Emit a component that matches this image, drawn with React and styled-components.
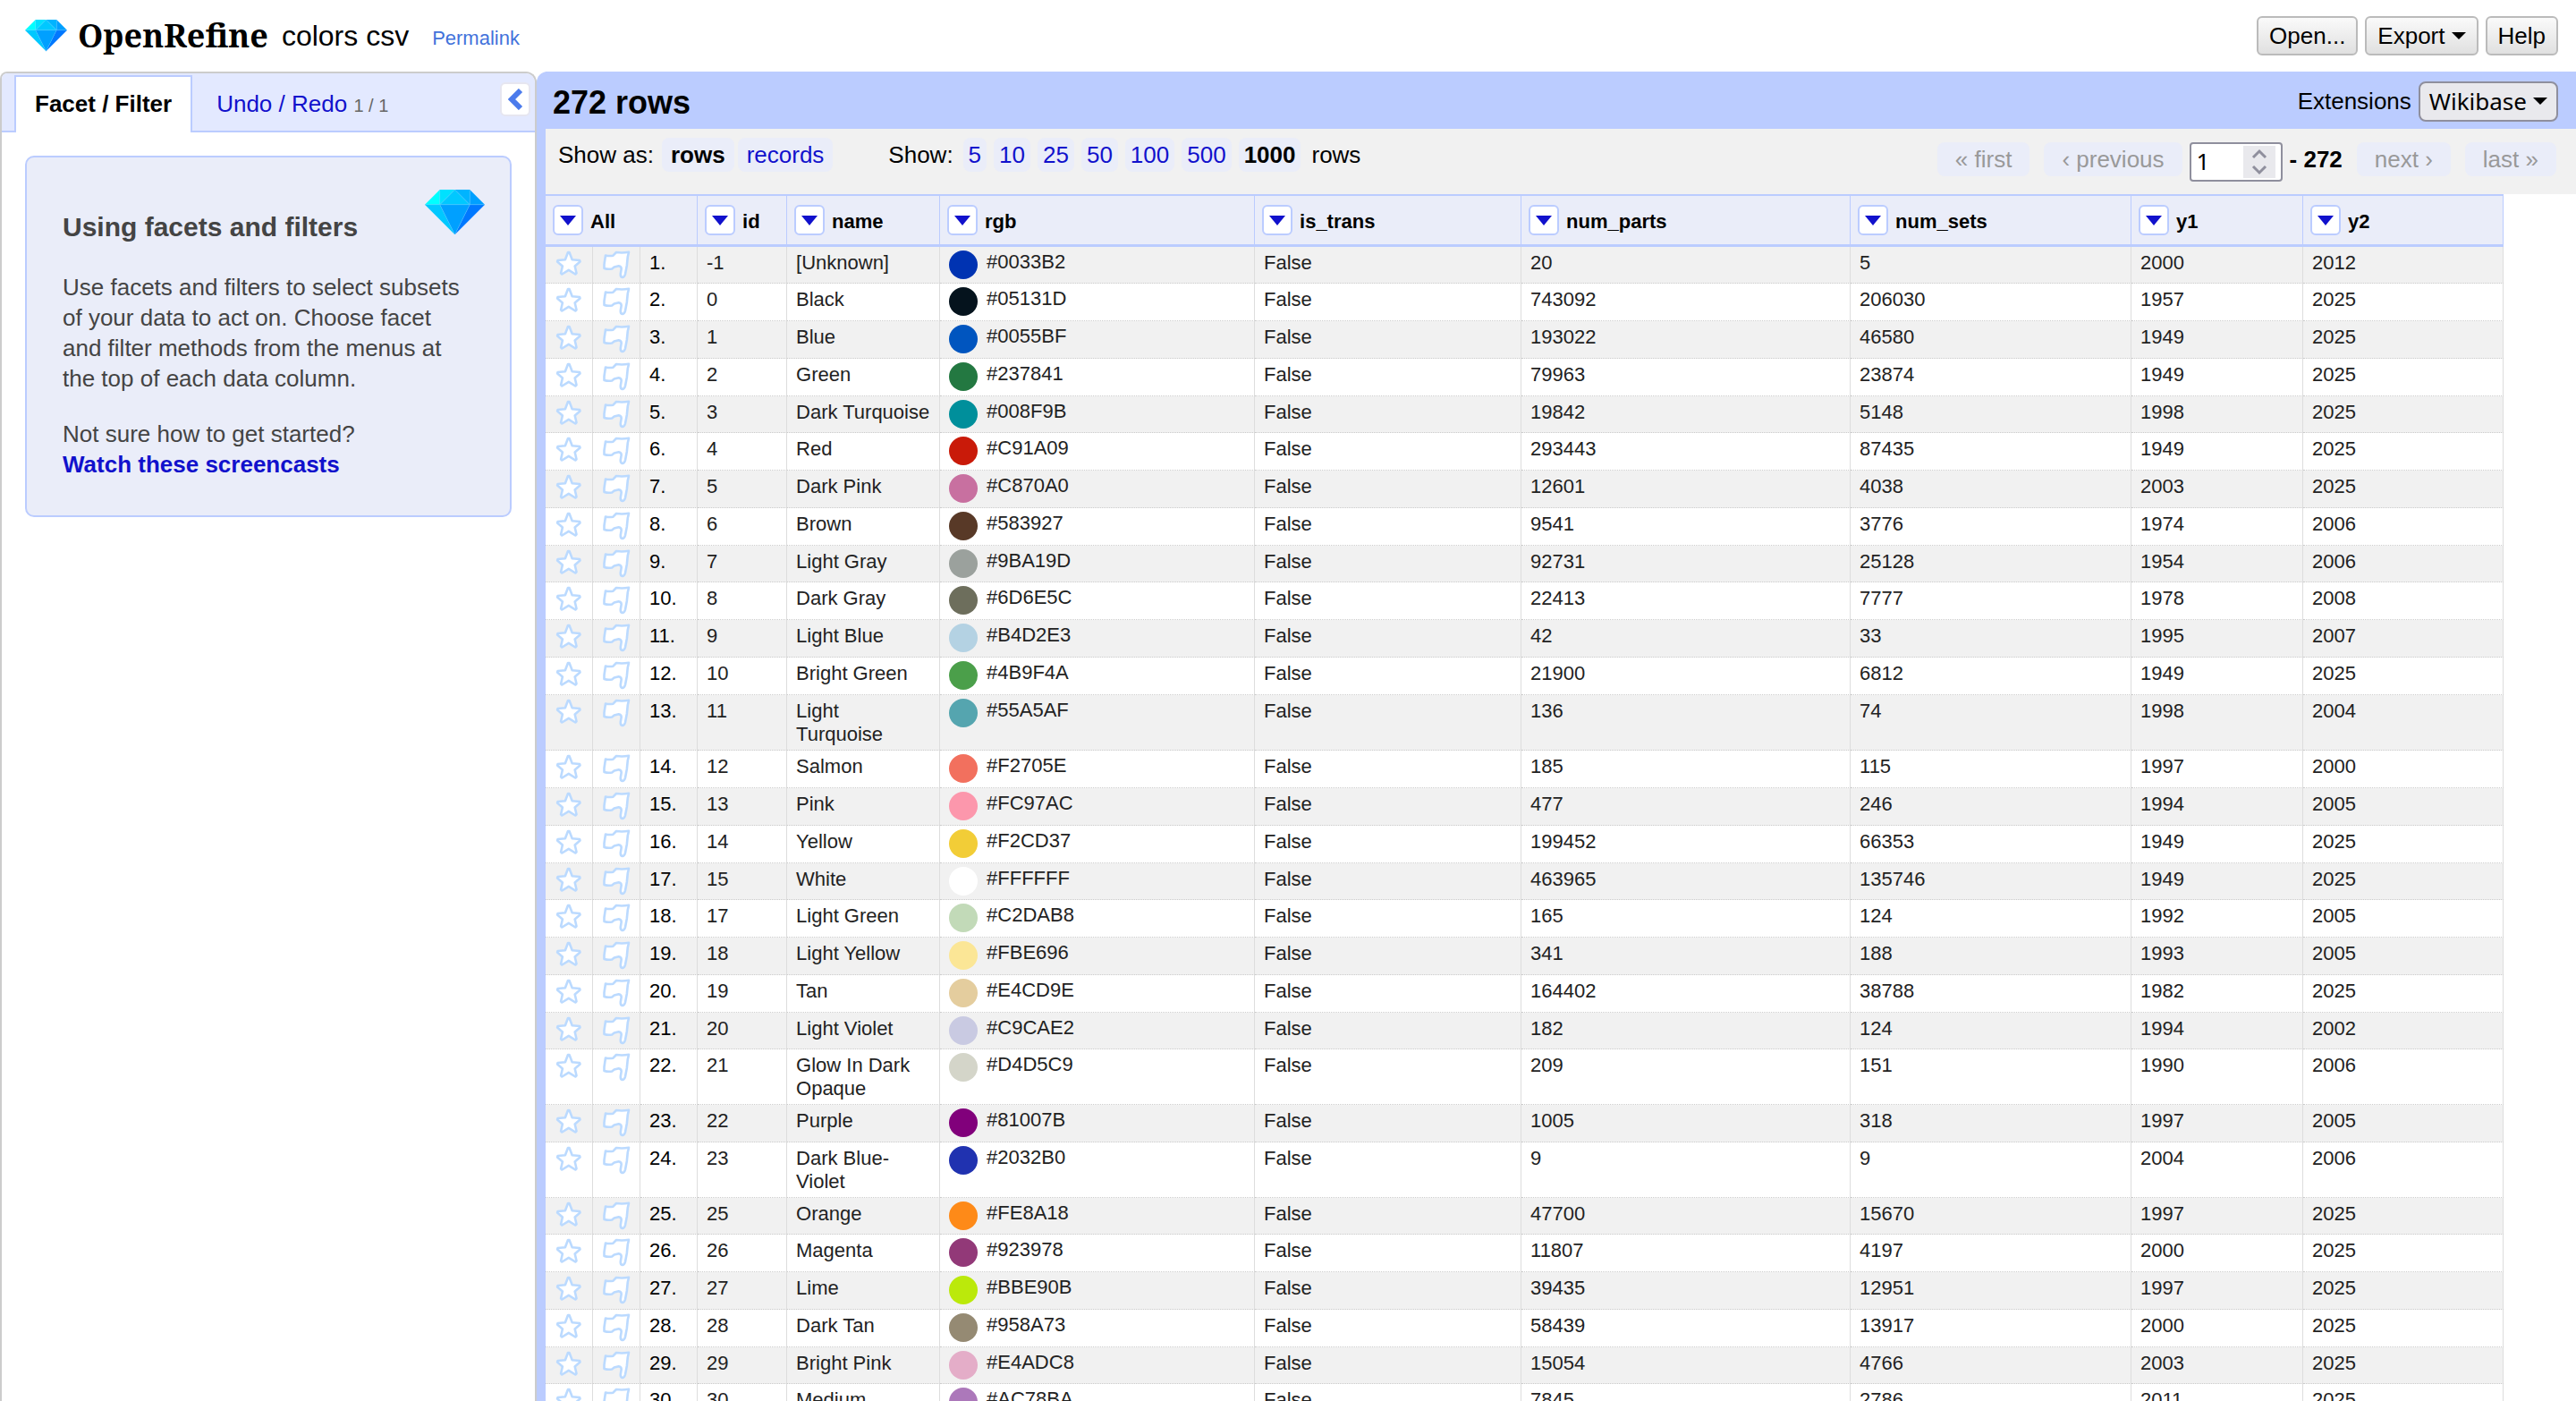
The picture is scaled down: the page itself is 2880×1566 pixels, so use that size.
import { createGlobalStyle } from 'styled-components'
import styled from 'styled-components'

const columns = ['id', 'name', 'rgb', 'is_trans', 'num_parts', 'num_sets', 'y1', 'y2']
const widths = [53, 53, 64, 100, 171, 352, 298, 368, 314, 192, 224]

const data = [
    ['-1', '[Unknown]', '0033B2', '20', '5', '2000', '2012'],
    ['0', 'Black', '05131D', '743092', '206030', '1957', '2025'],
    ['1', 'Blue', '0055BF', '193022', '46580', '1949', '2025'],
    ['2', 'Green', '237841', '79963', '23874', '1949', '2025'],
    ['3', 'Dark Turquoise', '008F9B', '19842', '5148', '1998', '2025'],
    ['4', 'Red', 'C91A09', '293443', '87435', '1949', '2025'],
    ['5', 'Dark Pink', 'C870A0', '12601', '4038', '2003', '2025'],
    ['6', 'Brown', '583927', '9541', '3776', '1974', '2006'],
    ['7', 'Light Gray', '9BA19D', '92731', '25128', '1954', '2006'],
    ['8', 'Dark Gray', '6D6E5C', '22413', '7777', '1978', '2008'],
    ['9', 'Light Blue', 'B4D2E3', '42', '33', '1995', '2007'],
    ['10', 'Bright Green', '4B9F4A', '21900', '6812', '1949', '2025'],
    ['11', 'Light Turquoise', '55A5AF', '136', '74', '1998', '2004'],
    ['12', 'Salmon', 'F2705E', '185', '115', '1997', '2000'],
    ['13', 'Pink', 'FC97AC', '477', '246', '1994', '2005'],
    ['14', 'Yellow', 'F2CD37', '199452', '66353', '1949', '2025'],
    ['15', 'White', 'FFFFFF', '463965', '135746', '1949', '2025'],
    ['17', 'Light Green', 'C2DAB8', '165', '124', '1992', '2005'],
    ['18', 'Light Yellow', 'FBE696', '341', '188', '1993', '2005'],
    ['19', 'Tan', 'E4CD9E', '164402', '38788', '1982', '2025'],
    ['20', 'Light Violet', 'C9CAE2', '182', '124', '1994', '2002'],
    ['21', 'Glow In Dark Opaque', 'D4D5C9', '209', '151', '1990', '2006'],
    ['22', 'Purple', '81007B', '1005', '318', '1997', '2005'],
    ['23', 'Dark Blue-Violet', '2032B0', '9', '9', '2004', '2006'],
    ['25', 'Orange', 'FE8A18', '47700', '15670', '1997', '2025'],
    ['26', 'Magenta', '923978', '11807', '4197', '2000', '2025'],
    ['27', 'Lime', 'BBE90B', '39435', '12951', '1997', '2025'],
    ['28', 'Dark Tan', '958A73', '58439', '13917', '2000', '2025'],
    ['29', 'Bright Pink', 'E4ADC8', '15054', '4766', '2003', '2025'],
    ['30', 'Medium Lavender', 'AC78BA', '7845', '2786', '2011', '2025'],
]

const Diamond = ({ width }) => (
    <svg width={width} viewBox="0 0 48 36" aria-hidden="true">
        <path fill="#00ffff" d="M12 0L0 12h12z" />
        <path fill="#00e1ff" d="M12 0h12L12 12z" />
        <path fill="#00c8ff" d="M24 0l12 12H12z" />
        <path fill="#00b4ff" d="M24 0h12v12z" />
        <path fill="#00a0ff" d="M36 0l12 12H36z" />
        <path fill="#00c8ff" d="M0 12h12l12 24z" />
        <path fill="#00a0ff" d="M12 12h24L24 36z" />
        <path fill="#0078ff" d="M36 12h12L24 36z" />
        <path fill="none" stroke="#5cf" strokeOpacity=".6" strokeWidth=".5" d="M0 12h48M12 0v12L24 0l12 12V0M12 12l12 24 12-24" />
    </svg>
)

const Star = () => (
    <svg width="30" height="30" viewBox="0 0 30 30" aria-hidden="true">
        <path
            fill="#fff"
            stroke="#bbdaff"
            strokeWidth="2.6"
            strokeLinejoin="round"
            d="M14 2h1.500l3.200 8.200 8.300.8.500 1.500-5.800 5 1.800 7.800-1.200 1.200-7.500-4.700-7.500 4.700-1.200-1.200 1.800-7.800-5.800-5 .500-1.500 8.300-.8z"
        />
    </svg>
)

const Flag = () => (
    <svg width="32" height="32" viewBox="0 0 32 32" aria-hidden="true">
        <path
            fill="#fff"
            stroke="#bbdaff"
            strokeWidth="2.6"
            strokeLinejoin="round"
            d="M4 5.500q4 1 8.500.2L16 2q7 1 14-.3-.6 3-1.200 5.300l-1 10-1.800 9.500q-1 3.500-3.200 3.500-2.300-.5-2-4l.9-5.500q0-2.700-3-3.200l-5 1.200-2.500 2q-4.500.8-8.700-.5v-4.500z"
        />
    </svg>
)

const App = () => {
    return (
        <>
            <GlobalStyle />
            <Page>
                <Header>
                    <Brand href="#"><Diamond width={47} />OpenRefine</Brand>
                    <ProjectName>colors csv</ProjectName>
                    <Permalink href="#">Permalink</Permalink>
                    <Actions>
                        <Button>Open...</Button>
                        <Button>Export<Caret /></Button>
                        <Button>Help</Button>
                    </Actions>
                </Header>
                <Main>
                    <Sidebar>
                        <Tabs>
                            <ActiveTab href="#">Facet / Filter</ActiveTab>
                            <Tab href="#">Undo / Redo <small>1 / 1</small></Tab>
                            <Collapse aria-label="Hide panel">
                                <svg width="18" height="24" viewBox="0 0 18 24">
                                    <path fill="none" stroke="#4b7bec" strokeWidth="6" d="M15 2L5 12l10 10" />
                                </svg>
                            </Collapse>
                        </Tabs>
                        <Help>
                            <HelpTop>
                                <H1>Using facets and filters</H1>
                                <Diamond width={67} />
                            </HelpTop>
                            <p>Use facets and filters to select subsets of your data to act on. Choose facet and filter methods from the menus at the top of each data column.</p>
                            <p>Not sure how to get started?<br /><a href="#">Watch these screencasts</a></p>
                        </Help>
                    </Sidebar>
                    <Content>
                        <Summary>
                            <H2>272 rows</H2>
                            <Extensions>Extensions <WikiButton>Wikibase<Caret /></WikiButton></Extensions>
                        </Summary>
                        <Controls>
                            <Modes>
                                <span>Show as:</span>
                                <Current>rows</Current>
                                <Option href="#">records</Option>
                            </Modes>
                            <Sizes>
                                <span>Show:</span>
                                {
                                    [5, 10, 25, 50, 100, 500].map((size) => <Option href="#" key={size}>{size}</Option>)
                                }
                                <Current>1000</Current>
                                <span>rows</span>
                            </Sizes>
                            <Pager>
                                <PageButton disabled>« first</PageButton>
                                <PageButton disabled>‹ previous</PageButton>
                                <Position>
                                    <PageField>
                                        <input type="text" aria-label="First row" defaultValue="1" />
                                        <Spinner>
                                            <svg width="18" height="30" viewBox="0 0 18 30">
                                                <path fill="none" stroke="#8f8f9d" strokeWidth="3" d="M2 10l7-7 7 7M2 20l7 7 7-7" />
                                            </svg>
                                        </Spinner>
                                    </PageField>
                                    <b>- 272</b>
                                </Position>
                                <PageButton disabled>next ›</PageButton>
                                <PageButton disabled>last »</PageButton>
                            </Pager>
                        </Controls>
                        <Table>
                            <colgroup>
                                {widths.map((width, index) => <Col key={index} $width={width} />)}
                            </colgroup>
                            <thead>
                                <tr>
                                    <Th colSpan={3}><Heading><Menu aria-label="All" />All</Heading></Th>
                                    {
                                        columns.map((name) => (
                                            <Th key={name}><Heading><Menu aria-label={name} />{name}</Heading></Th>
                                        ))
                                    }
                                </tr>
                            </thead>
                            <tbody>
                                {
                                    data.map(([id, name, rgb, parts, sets, y1, y2], index) => (
                                        <Row key={id}>
                                            <IconCell><IconButton aria-label="Star"><Star /></IconButton></IconCell>
                                            <IconCell><IconButton aria-label="Flag"><Flag /></IconButton></IconCell>
                                            <NumberCell>{index + 1}.</NumberCell>
                                            <Td>{id}</Td>
                                            <Td>{name}</Td>
                                            <ColorCell><Color><Swatch $color={`#${rgb}`} />#{rgb}</Color></ColorCell>
                                            <Td>False</Td>
                                            <Td>{parts}</Td>
                                            <Td>{sets}</Td>
                                            <Td>{y1}</Td>
                                            <Td>{y2}</Td>
                                        </Row>
                                    ))
                                }
                            </tbody>
                        </Table>
                    </Content>
                </Main>
            </Page>
        </>
    )
}

const GlobalStyle = createGlobalStyle`
    * {
        box-sizing: border-box;
    }
    body {
        margin: 0;
        color: #000;
        background-color: #fff;
        font: 26px/34px "Liberation Sans", Arial, sans-serif;
    }
    a {
        color: #11c;
        text-decoration: none;
    }
    button, input {
        font: inherit;
    }
    svg {
        display: block;
    }
`

const Page = styled.div`
    display: flex;
    flex-direction: column;
    height: 100vh;
    overflow: hidden;
`
const Header = styled.header`
    display: flex;
    align-items: center;
    height: 80px;
    padding: 0 20px 0 28px;
`
const Brand = styled.a`
    display: flex;
    align-items: center;
    gap: 12px;
    color: #000;
    font: bold 36px/48px "Noto Serif", "DejaVu Serif Condensed", serif;
`
const ProjectName = styled.h1`
    margin: 0 26px 0 15px;
    font-size: 32px;
    font-weight: normal;
`
const Permalink = styled.a`
    padding-top: 6px;
    color: #4272db;
    font-size: 22px;
`
const Actions = styled.div`
    display: flex;
    gap: 8px;
    margin-left: auto;
`
const Button = styled.button`
    display: flex;
    align-items: center;
    gap: 7px;
    height: 44px;
    padding: 0 12px;
    border: 2px solid #bbb;
    border-radius: 6px;
    color: #000;
    background: linear-gradient(#fafafa, #e0e0e0);
`
const Caret = styled.i`
    border: 8px solid transparent;
    border-top-color: #000;
    border-bottom: 0;
`
const Main = styled.main`
    display: flex;
    flex: 1;
    min-height: 0;
`
const Sidebar = styled.aside`
    flex: none;
    width: 600px;
    border: 2px solid #ccc;
    border-bottom: 0;
    border-radius: 8px 12px 0 0;
    overflow: hidden;
`
const Tabs = styled.nav`
    display: flex;
    height: 66px;
    padding: 2px 5px 0 14px;
    background: linear-gradient(#bbccff, #bbccff) bottom / 100% 2px no-repeat #e3e9ff;
`
const Tab = styled.a`
    padding: 15px 27px 0;
    small {
        color: #666;
        font-size: 20px;
    }
`
const ActiveTab = styled(Tab)`
    padding: 13px 21px 0;
    border: 2px solid #bbccff;
    border-bottom: 0;
    color: #000;
    background-color: #fff;
    font-weight: bold;
`
const Collapse = styled.button`
    display: flex;
    align-items: center;
    justify-content: center;
    width: 34px;
    height: 38px;
    margin: 8px 0 0 auto;
    padding: 0;
    border: 2px solid #e6e6f0;
    border-radius: 6px;
    background-color: #fff;
`
const Help = styled.section`
    margin: 26px;
    padding: 36px 28px 40px 40px;
    border: 2px solid #bbccff;
    border-radius: 10px;
    color: #444;
    background-color: #eaedf9;
    p {
        margin: 0 20px 28px 0;
    }
    p:last-child {
        margin-bottom: 0;
    }
    a {
        font-weight: bold;
    }
`
const HelpTop = styled.div`
    display: flex;
    align-items: flex-start;
    justify-content: space-between;
    height: 92px;
`
const H1 = styled.h1`
    margin: 25px 0 0;
    font-size: 30px;
`
const Content = styled.section`
    flex: 1;
    min-width: 0;
    border-left: 10px solid #bbccff;
    border-radius: 12px 0 0 0;
`
const Summary = styled.div`
    display: flex;
    align-items: center;
    justify-content: space-between;
    height: 64px;
    padding: 2px 20px 0 8px;
    background-color: #bbccff;
`
const H2 = styled.h2`
    margin: 4px 0 0;
    font-size: 36px;
`
const Extensions = styled.div`
    display: flex;
    align-items: center;
    gap: 8px;
`
const WikiButton = styled(Button)`
    height: 45px;
    padding: 0 10px;
    border-color: #8f8f9d;
    border-radius: 8px;
    background: #e9e9ed;
    font-family: "Noto Sans", sans-serif;
`
const Controls = styled.div`
    display: flex;
    height: 73px;
    padding: 10px 22px 0 14px;
    background-color: #f1f1f1;
`
const Option = styled.a`
    height: 38px;
    border-radius: 8px;
    background-color: #eaedf9;
`
const Current = styled.b`
    height: 38px;
    border-radius: 8px;
    background-color: #eaedf9;
`
const Modes = styled.div`
    display: flex;
    gap: 4px;
    > * {
        padding: 2px 10px;
    }
    span {
        padding: 2px 5px 0 0;
    }
`
const Sizes = styled.div`
    display: flex;
    gap: 8px;
    margin-left: 62px;
    > * {
        padding: 2px 6px;
    }
    span {
        padding: 2px 3px 0 0;
    }
    span:last-child {
        padding: 2px 0 0 4px;
    }
`
const Pager = styled.div`
    display: flex;
    align-items: flex-start;
    gap: 16px;
    margin-left: auto;
    padding-top: 5px;
`
const PageButton = styled.button`
    height: 38px;
    padding: 0 20px;
    border: 0;
    border-radius: 8px;
    color: #999;
    background-color: #eaedf9;
`
const Position = styled.div`
    display: flex;
    gap: 8px;
    margin-left: -8px;
    b {
        padding-top: 2px;
    }
`
const PageField = styled.div`
    display: flex;
    align-items: center;
    width: 104px;
    height: 44px;
    padding: 0 6px;
    border: 2px solid #8f8f9d;
    border-radius: 4px;
    background-color: #fff;
    input {
        width: 52px;
        height: 36px;
        padding: 0 0 2px;
        border: 0;
        font-family: "Noto Sans", sans-serif;
    }
`
const Spinner = styled.span`
    display: flex;
    align-items: center;
    justify-content: center;
    width: 36px;
    height: 36px;
    background-color: #e9e9ed;
`
const Table = styled.table`
    width: 2189px;
    table-layout: fixed;
    border-collapse: separate;
    border-spacing: 0;
    border-top: 2px solid #bbccff;
    font-size: 22px;
    line-height: 26px;
`
const Col = styled.col`
    width: ${({ $width }) => $width}px;
`
const Th = styled.th`
    height: 57px;
    padding: 0 8px;
    border-right: 1px solid #bbccff;
    border-bottom: 3px solid #bbccff;
    background-color: #eaedf9;
    text-align: left;
`
const Heading = styled.div`
    display: flex;
    align-items: flex-end;
    gap: 8px;
    line-height: 30px;
`
const Menu = styled.button`
    display: flex;
    align-items: center;
    justify-content: center;
    width: 34px;
    height: 34px;
    padding: 0;
    border: 2px solid #bbccff;
    border-radius: 6px;
    background-color: #fff;
    &::before {
        content: '';
        border: 9px solid transparent;
        border-top: 11px solid #11c;
        border-bottom: 0;
    }
`
const Td = styled.td`
    padding: 5px 10px 4px;
    border-right: 1px solid #ddd;
    border-bottom: 1px dotted #ccc;
    color: #222;
    vertical-align: top;
`
const NumberCell = styled(Td)`
    color: #000;
`
const IconCell = styled(Td)`
    padding: 4px 0 0;
`
const ColorCell = styled(Td)`
    padding: 4px 10px 0;
`
const IconButton = styled.button`
    display: block;
    margin: 0 auto;
    padding: 0;
    border: 0;
    background: none;
`
const Color = styled.div`
    display: flex;
    gap: 10px;
`
const Swatch = styled.i`
    width: 32px;
    height: 32px;
    border-radius: 50%;
    background-color: ${({ $color }) => $color};
`
const Row = styled.tr`
    height: 42px;
    &:nth-child(odd) {
        background-color: #f1f1f1;
    }
    &:nth-child(4n + 1) {
        height: 41px;
    }
`

export default App
